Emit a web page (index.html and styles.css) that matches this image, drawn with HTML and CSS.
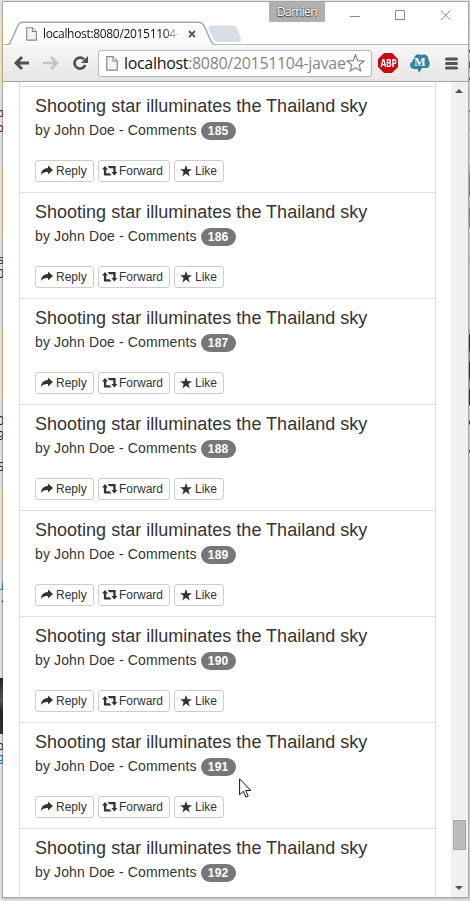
FILE: index.html
```html
<!DOCTYPE html>
<html lang="en">
<head>
<meta charset="utf-8">
<title>localhost:8080/20151104-javaee</title>
<link rel="stylesheet" href="styles.css">
</head>
<body>
<svg class="defs" width="0" height="0">
  <symbol id="page" viewBox="0 0 12 15"><path d="M.8.7H7l4.3 4.2v9.3H.8z" fill="#f4f4f4" stroke="#858585" stroke-width="1.2"/><path d="M7 .7v4.2h4.3" fill="#fff" stroke="#858585" stroke-width="1.1"/></symbol>
  <symbol id="reply" viewBox="0 0 12 12"><path d="M7 .6 12 5 7 9.400V7C4 6.800 1.800 7.300 0 10 0 5.800 2.600 3.200 7 3z" fill="#333"/></symbol>
  <symbol id="forward" viewBox="0 0 16 12"><path d="M3 1 6 4.600H4.200v3.600h3.600l1.700 2.200H1.900V4.600H0zM5.600 1h8v6H15.500L12.400 10.600 9.300 7h2V3.200H7.300z" fill="#333"/></symbol>
  <symbol id="star" viewBox="0 0 12 12"><path d="m6 0 1.500 4.300H12L8.400 7l1.300 4.400L6 8.700l-3.700 2.700L3.600 7 0 4.300h4.500z" fill="#333"/></symbol>
</svg>
<div class="behind-left">
  <i class="sand s1"></i><i class="sand s2"></i><i class="sand s3"></i><i class="sand s4"></i>
  <b class="g1">b</b><b class="g2">o</b><b class="g3">s</b><b class="g4">0</b><b class="g5">0</b><b class="g6">9</b><b class="g7">S</b><b class="g8">u</b><b class="g9">.</b><b class="g10">o</b><b class="g11">9</b>
  <i class="photo"></i>
</div>
<div class="window">
  <header class="titlebar">
    <svg class="tabs" width="465" height="43" viewBox="4 2 465 43">
      <defs><linearGradient id="tabfill" x2="0" y2="1"><stop offset="0" stop-color="#fff"/><stop offset="1" stop-color="#f8f8f8"/></linearGradient></defs>
      <path d="M210 29q0-3 3-3h21q3 0 4.500 4l3 9q1 2.500-2 2.500H219q-3 0-4-3z" fill="#d9dee5" stroke="#ccd1d8" stroke-width=".7"/>
      <path d="M4 44.500h3c3 0 4-1 5-4l6.500-14.500c1.500-3.500 2.500-4.500 6-4.500H199c3.500 0 5 1 6.500 4.500L212 40.500c1.500 3.500 3 4.500 6 4.500z" fill="url(#tabfill)"/>
      <path d="M3 45h4c3 0 4-1 5-4l6.500-14.500c1.500-3.500 2.500-4.200 6-4.200H199c3.500 0 5 1 6.500 4.500L212 41c1.500 3.500 3 4 6 4H469" fill="none" stroke="#a7a7a7" stroke-width="1.500"/>
    </svg>
    <div class="tab">
      <svg width="11" height="14"><use href="#page"/></svg>
      <span class="tab-title">localhost:8080/20151104-</span>
      <svg class="tab-close" width="8" height="8"><path d="m1 1 6 6m0-6-6 6" stroke="#555" stroke-width="1.800"/></svg>
    </div>
    <div class="user">Damien</div>
    <svg class="controls" width="104" height="12" fill="none" stroke="#888"><path d="M0 7.500h10M91 1.500l9.500 9.500m0-9.500-9.500 9.500"/><path d="M45.500 1.500h9v9h-9z"/></svg>
  </header>
  <nav class="toolbar">
    <svg class="navicons" width="76" height="18" fill="none">
      <path d="M2.500 9H16M9 3 3 9l6 6" stroke="#505050" stroke-width="2.900"/>
      <path d="M30 9h13M38 3l6 6-6 6" stroke="#c1c1c1" stroke-width="2.500"/>
      <path d="M71 5.300A5.500 5.500 0 1 0 72.200 11" stroke="#505050" stroke-width="2.700"/><path d="M75 2v7h-7z" fill="#505050"/>
    </svg>
    <div class="address">
      <svg class="page-icon" width="12" height="15"><use href="#page"/></svg>
      <span class="url"><span>localhost</span>:8080/20151104-javaee</span>
      <svg class="bookmark" width="19" height="18" viewBox="0 0 19 18"><path d="m9.500 1 2.300 5.700 6.100.4-4.700 3.900 1.500 5.900-5.200-3.200-5.200 3.200L5.800 11 1.100 7.100l6.100-.4z" fill="#fff" stroke="#858585" stroke-width="1.200"/></svg>
    </div>
    <div class="abp"><span>ABP</span></div>
    <div class="cloud"><svg width="20" height="19" viewBox="0 0 20 19"><path d="M4 5C5-.5 9 0 11 1c5-2 8 2 7.500 5 2 2 1.500 7-1.500 8H12l-3 5-1.500-4H4C-1 15-1 8 2.500 8Q2 6 4 5z" fill="#31849f"/></svg><b>M</b></div>
    <svg class="menu" width="13" height="13"><path d="M1.500 2h10m-10 4.500h10M1.500 11h10" stroke="#555" stroke-width="3" stroke-linecap="round"/></svg>
  </nav>
  <div class="viewport">
    <main class="list" id="list"></main>
    <aside class="scrollbar"><i class="up"></i><i class="thumb"></i><i class="down"></i></aside>
  </div>
</div>
<div class="behind-right"></div>
<svg class="cursor" width="13" height="20" viewBox="0 0 13 20"><path d="M.6.8v16l3.700-3.500 2.500 5.800 2.400-1-2.500-5.600h5z" fill="#fff" stroke="#101020"/></svg>
<script src="script.js"></script>
</body>
</html>
```
FILE: styles.css
```css
* { box-sizing: border-box; }
body { margin: 0; width: 470px; height: 901px; overflow: hidden; background: #e6e6e6; font-family: "Liberation Sans", Arial, sans-serif; color: #333; position: relative; }
svg { display: block; flex: none; }
.defs { position: absolute; }
.window { width: 467px; height: 897px; margin: 1px 0 0 2px; border: 1px solid #a8a8a8; background: #fff; box-shadow: 0 1px 2px #b5b5b5; position: relative; }
.titlebar { height: 43px; position: relative; }
.tabs { position: absolute; left: 0; top: 0; }
.tab { position: absolute; left: 23px; top: 24px; display: flex; align-items: center; height: 16px; width: 172px; }
.tab-title { margin-left: 6px; width: 137px; overflow: hidden; white-space: nowrap; font: 12px/16px "Open Sans", sans-serif; letter-spacing: -.32px; color: #111; -webkit-mask-image: linear-gradient(90deg, #000 88%, transparent); mask-image: linear-gradient(90deg, #000 88%, transparent); }
.tab-close { margin-left: 8px; }
.user { position: absolute; left: 266px; top: 0; width: 56px; height: 20px; background: #b0b0b0; color: #fff; font: 12px/20px "Open Sans", sans-serif; letter-spacing: -.6px; text-align: center; text-shadow: 0 0 2px #444, 0 1px 1px #444; }
.controls { position: absolute; left: 347px; top: 7px; }
.toolbar { height: 37px; border-bottom: 1px solid #a5a5a5; background: linear-gradient(#f7f7f7, #e5e5e5); display: flex; align-items: center; padding-left: 10px; }
.navicons { margin-right: 9px; }
.address { width: 274px; height: 27px; border: 1px solid #b5b5b5; border-radius: 3px; background: #fff; display: flex; align-items: center; padding-left: 7px; overflow: hidden; }
.url { width: 222px; margin-left: 6px; overflow: hidden; white-space: nowrap; color: #858585; font: 16px/24px "Open Sans", sans-serif; letter-spacing: -.32px; }
.url span { color: #111; }
.abp { margin-left: 6px; width: 20px; height: 20px; background: #c70d12; clip-path: polygon(30% 0,70% 0,100% 30%,100% 70%,70% 100%,30% 100%,0 70%,0 30%); color: #fff; display: flex; justify-content: center; font: bold 10px/20px "Open Sans", sans-serif; letter-spacing: -.3px; }
.abp span { transform: scaleX(.85); }
.cloud { margin-left: 12px; width: 20px; height: 19px; position: relative; }
.cloud b { position: absolute; inset: 0; text-align: center; color: #fff; font: bold 12px/17px "Liberation Serif", serif; }
.menu { margin-left: 15px; }
.viewport { height: 815px; display: flex; overflow: hidden; }
.list { width: 417px; height: 815px; margin-left: 16px; padding-top: 4px; border: solid #ddd; border-width: 0 1px; overflow: hidden; }
.item { height: 106px; border-top: 1px solid #ddd; padding: 10px 15px; }
.item h4 { margin: 0 0 3px; font-weight: 400; font-size: 18px; line-height: 19.8px; letter-spacing: .01px; }
.item p { margin: 0; height: 20px; font-size: 14px; line-height: 20px; white-space: nowrap; letter-spacing: .13px; }
.badge { display: inline-block; width: 35px; height: 18px; padding: 3px 0; border-radius: 10px; background: #777; color: #fff; font: bold 12px/12px "Liberation Sans", sans-serif; letter-spacing: .3px; text-align: center; vertical-align: middle; }
.actions { display: flex; gap: 4px; margin-top: 20.200px; }
.btn { height: 22px; border: 1px solid #ccc; border-radius: 3px; background: #fff; padding: 0 5px; display: flex; align-items: center; font-size: 12px; line-height: 18px; white-space: nowrap; }
.btn svg { margin-right: 3px; }
.reply { width: 59px; }
.forward { width: 72px; padding-left: 3px; }
.forward svg { margin-right: 1px; }
.like { width: 50px; }
.scrollbar { margin-left: 15px; width: 17px; background: #f0f0f0; display: flex; flex-direction: column; align-items: center; }
.up { margin: 7px 1px 0 0; border: 4px solid transparent; border-top: 0; border-bottom-color: #505050; }
.thumb { margin-top: 727px; width: 13px; height: 30px; background: #bcbcbc; border: 1px solid #a8a8a8; }
.down { margin: 36px 1px 0 0; border: 4px solid transparent; border-bottom: 0; border-top-color: #505050; }
.cursor { position: absolute; left: 239px; top: 778px; }
.behind-left { position: absolute; left: 0; top: 0; width: 3px; height: 901px; overflow: hidden; z-index: 1; }
.behind-left i, .behind-left b { position: absolute; right: 0; }
.behind-left b { right: -1px; font: 12px/12px "Open Sans", sans-serif; color: #222; }
.sand { width: 1px; height: 70px; background: #c0ad72; }
.s1 { top: 19px; }
.s2 { top: 166px; }
.s3 { top: 328px; }
.s4 { top: 490px; }
.behind-left .g1 { top: 107px; color: #603; }
.behind-left .g2 { top: 122px; color: #603; }
.g3 { top: 254px; }
.g4 { top: 268px; }
.g5 { top: 415px; }
.g6 { top: 430px; }
.g7 { top: 461px; }
.behind-left .g8 { top: 580px; color: #06a; }
.g9 { top: 592px; }
.g10 { top: 740px; }
.behind-left .g11 { top: 754px; color: #06a; }
.photo { top: 678px; width: 3px; height: 56px; background: linear-gradient(#222, #555 40%, #222 60%, #333); }
.behind-right { position: absolute; right: 0; top: 0; width: 1px; height: 901px; background: linear-gradient(#ccc 20px, #d4c56b 21px 26px, #ccc 27px 49px, #2871a5 50px 52px, #ccc 53px 61px, #2871a5 62px 68px, #ccc 69px 77px, #2871a5 78px 80px, #ccc 81px 110px, #444 111px, #ccc 112px 127px, #8bc3dc 128px 131px, #ccc 132px 165px, #b4a974 166px 174px, #b86852 175px 196px, #bba 197px 207px, #b86852 208px 217px, #8d9b45 218px 227px, #ccc 228px 255px, #8bc3dc 256px 263px, #ccc 264px 328px, #b4a974 329px 334px, #333 335px 351px, #888 352px 361px, #333 362px 379px, #888 380px 389px, #333 390px 405px, #ccc 406px 420px, #624 421px 424px, #ccc 425px 449px, #2871a5 450px 452px, #ccc 453px);}
```
FILE: script.js
```js
const icon = (name, width) => `<svg width="${width}" height="12"><use href="#${name}"/></svg>`;
const list = document.getElementById("list");
for (let count = 185; count <= 192; count++) {
  list.insertAdjacentHTML("beforeend", `<article class="item">
    <h4>Shooting star illuminates the Thailand sky</h4>
    <p>by John Doe - Comments <span class="badge">${count}</span></p>
    <div class="actions">
      <span class="btn reply">${icon("reply", 12)}Reply</span>
      <span class="btn forward">${icon("forward", 16)}Forward</span>
      <span class="btn like">${icon("star", 12)}Like</span>
    </div>
  </article>`);
}
```
